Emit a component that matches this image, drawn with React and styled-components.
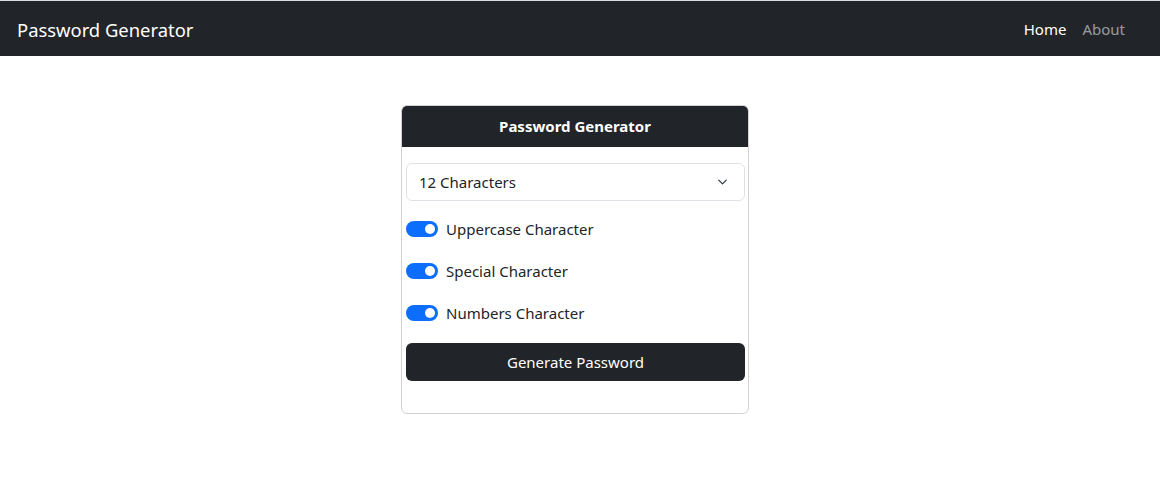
import React, { useState } from 'react';
import styled, { createGlobalStyle } from 'styled-components';

const GlobalStyle = createGlobalStyle`
  body {
    margin: 0;
    font-family: "Noto Sans", "Open Sans", sans-serif;
    color: #212529;
    background: #fff;
    border-top: 1px solid #d9dadb;
  }
  * { box-sizing: border-box; }
`;

const Navbar = styled.nav`
  background-color: #212529;
  height: 55px;
  display: flex;
  align-items: center;
  justify-content: space-between;
  padding: 1px 35px 0 17px;
`;

const Brand = styled.a`
  color: #fff;
  font-size: 18.4px;
  text-decoration: none;
`;

const NavLinks = styled.div`
  display: flex;
  gap: 16px;
`;

const NavLink = styled.a`
  color: ${(p) => (p.active ? '#fff' : 'rgba(255, 255, 255, 0.55)')};
  font-size: 15px;
  text-decoration: none;
`;

const Main = styled.main`
  display: flex;
  justify-content: center;
  padding-top: 49px;
  padding-right: 10px;
`;

const Card = styled.div`
  width: 348px;
  height: 309px;
  border: 1px solid rgba(0, 0, 0, 0.175);
  border-radius: 6px;
  overflow: hidden;
`;

const CardHeader = styled.div`
  background-color: #212529;
  color: #fff;
  font-weight: 700;
  font-size: 15px;
  text-align: center;
  height: 41px;
  line-height: 41px;
`;

const CardBody = styled.div`
  padding: 16px 3px 16px 4px;
  display: flex;
  flex-direction: column;
`;

const SelectBox = styled.div`
  height: 38px;
  border: 1px solid #dee2e6;
  border-radius: 6px;
  display: flex;
  align-items: center;
  justify-content: space-between;
  padding: 0 15px 0 12px;
  font-size: 15px;
  margin-bottom: 7px;
`;

const Row = styled.label`
  display: flex;
  align-items: center;
  gap: 8px;
  height: 42px;
  font-size: 15px;
`;

const Switch = styled.span`
  position: relative;
  width: 32px;
  height: 16px;
  border-radius: 8px;
  background-color: ${(p) => (p.on ? '#0d6efd' : '#dee2e6')};
  flex-shrink: 0;

  &::after {
    content: '';
    position: absolute;
    top: 3px;
    left: ${(p) => (p.on ? '19px' : '3px')};
    width: 10px;
    height: 10px;
    border-radius: 50%;
    background: #fff;
  }
`;

const Button = styled.button`
  margin-top: 9px;
  height: 38px;
  border: none;
  border-radius: 6px;
  background-color: #212529;
  color: #fff;
  font-family: inherit;
  font-size: 15px;
  cursor: pointer;
`;

const options = [
  'Uppercase Character',
  'Special Character',
  'Numbers Character',
];

const App = () => {
  const [toggles, setToggles] = useState([true, true, true]);

  const flip = (i) =>
    setToggles((prev) => prev.map((v, j) => (j === i ? !v : v)));

  return (
    <>
      <GlobalStyle />
      <Navbar>
        <Brand href="#">Password Generator</Brand>
        <NavLinks>
          <NavLink href="#" active>Home</NavLink>
          <NavLink href="#">About</NavLink>
        </NavLinks>
      </Navbar>
      <Main>
        <Card>
          <CardHeader>Password Generator</CardHeader>
          <CardBody>
            <SelectBox>
              <span>12 Characters</span>
              <svg width="13" height="10" viewBox="0 0 16 16">
                <path d="m2 5 6 6 6-6" fill="none" stroke="#343a40" strokeWidth="2" strokeLinecap="round" strokeLinejoin="round" />
              </svg>
            </SelectBox>
            {options.map((label, i) => (
              <Row key={label} onClick={() => flip(i)}>
                <Switch on={toggles[i]} />
                {label}
              </Row>
            ))}
            <Button>Generate Password</Button>
          </CardBody>
        </Card>
      </Main>
    </>
  );
};

export default App;
